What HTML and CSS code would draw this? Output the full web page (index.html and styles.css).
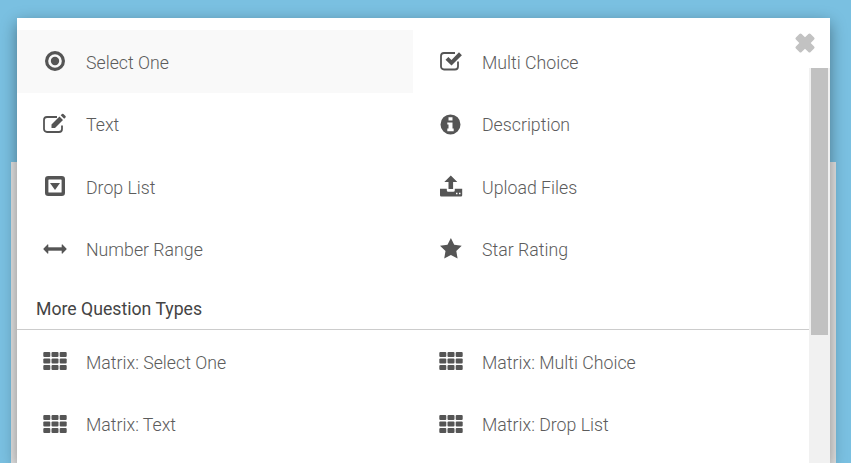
FILE: index.html
```html
<!DOCTYPE html>
<html lang="en">
<head>
<meta charset="utf-8">
<title>Question Types</title>
<link rel="stylesheet" href="styles.css">
</head>
<body>
<svg class="defs" aria-hidden="true"><symbol id="matrix" viewBox="0 0 24 24"><rect x=".3" y="3" width="7" height="5" rx="1"/><rect x="8.500" y="3" width="7" height="5" rx="1"/><rect x="16.700" y="3" width="7" height="5" rx="1"/><rect x=".3" y="9.500" width="7" height="5" rx="1"/><rect x="8.500" y="9.500" width="7" height="5" rx="1"/><rect x="16.700" y="9.500" width="7" height="5" rx="1"/><rect x=".3" y="16" width="7" height="5" rx="1"/><rect x="8.500" y="16" width="7" height="5" rx="1"/><rect x="16.700" y="16" width="7" height="5" rx="1"/></symbol></svg>
<div class="backdrop-panel"></div>
<div class="modal">
  <button class="close" aria-label="Close"><svg viewBox="0 0 22 22" width="22" height="22"><path d="M1.9 5.4 5.4 1.9a1.6 1.6 0 0 1 2.200 0L11 5.300 14.400 1.900a1.600 1.600 0 0 1 2.200 0l3.500 3.500a1.600 1.600 0 0 1 0 2.200L16.700 11l3.400 3.400a1.600 1.600 0 0 1 0 2.200l-3.500 3.500a1.600 1.600 0 0 1-2.200 0L11 16.700l-3.400 3.400a1.600 1.600 0 0 1-2.200 0l-3.500-3.500a1.600 1.600 0 0 1 0-2.200L5.300 11 1.900 7.600a1.600 1.600 0 0 1 0-2.200z"/></svg></button>
  <div class="scrollbar"><div class="thumb"></div></div>
  <div class="content">
    <div class="grid">
      <div class="item active"><span class="icon"><svg viewBox="0 0 24 24"><circle cx="12" cy="12" r="8.400" class="ring"/><circle cx="12" cy="12" r="4.200"/></svg></span><span class="label">Select One</span></div>
      <div class="item"><span class="icon"><svg viewBox="0 0 24 24"><path class="line" d="M19 12.500V17.500a3 3 0 0 1-3 3H5a3 3 0 0 1-3-3V7a3 3 0 0 1 3-3H16"/><path d="m6.500 10.800 2.900-2.900 3.100 3.100L20 3.300l2.900 2.900-10.400 10.400z"/></svg></span><span class="label">Multi Choice</span></div>
      <div class="item"><span class="icon"><svg viewBox="0 0 24 24"><path class="line" d="M19 13.500V17a3 3 0 0 1-3 3H4a3 3 0 0 1-3-3V8a3 3 0 0 1 3-3H14"/><path d="m8.500 12.500 8-8 3.500 3.500-8 8H8.500zM17.700 3.300l1.300-1.300a1 1 0 0 1 1.400 0l2.100 2.100a1 1 0 0 1 0 1.400l-1.300 1.300z"/></svg></span><span class="label">Text</span></div>
      <div class="item"><span class="icon"><svg viewBox="0 0 24 24"><path fill-rule="evenodd" d="M11.500 2.400a10 10 0 1 1 0 20 10 10 0 0 1 0-20zM9.500 5.200v3.200h4V5.200zM8.300 10.400v2.200h1.200v4H8.300v2.600h6.400v-2.600h-1.200v-6.200z"/></svg></span><span class="label">Description</span></div>
      <div class="item"><span class="icon"><svg viewBox="0 0 24 24"><path fill-rule="evenodd" d="M5.200 2h13.600A3.200 3.200 0 0 1 22 5.200v13.600a3.200 3.200 0 0 1-3.200 3.200H5.200A3.200 3.200 0 0 1 2 18.800V5.200A3.200 3.200 0 0 1 5.200 2zM6 5.400a.6.600 0 0 0-.6.600v12a.6.600 0 0 0 .6.600h12a.6.600 0 0 0 .6-.6V6a.6.600 0 0 0-.6-.6z"/><path d="M7 9h10l-5 7z"/></svg></span><span class="label">Drop List</span></div>
      <div class="item"><span class="icon"><svg viewBox="0 0 24 24"><path fill-rule="evenodd" d="M11.800 1.600 18.300 8h-4.200v7H9.500V8H5.300zM1 14.800h6.800v1.400a1.500 1.500 0 0 0 1.500 1.500h5a1.500 1.500 0 0 0 1.500-1.500v-1.400h7.400v6.400a1.200 1.200 0 0 1-1.200 1.200H2.200A1.200 1.200 0 0 1 1 21.200zM17 18.800v1.400h1.500v-1.400zM20 18.800v1.400h1.500v-1.400z"/></svg></span><span class="label">Upload Files</span></div>
      <div class="item"><span class="icon"><svg viewBox="0 0 24 24"><path d="M4 10.300H20V13.700H4z"/><path d="M5.300 7.700v8.600a.5.5 0 0 1-.8.300L.6 12.500a.7.700 0 0 1 0-1l3.900-4.100a.5.5 0 0 1 .8.300zM18.700 7.700v8.600a.5.5 0 0 0 .8.300l3.900-4.100a.7.700 0 0 0 0-1l-3.900-4.100a.5.5 0 0 0-.8.300z"/></svg></span><span class="label">Number Range</span></div>
      <div class="item"><span class="icon"><svg viewBox="0 0 24 24"><path d="m11.900 1 3.300 6.800 7.500 1-5.400 5.300 1.300 7.500-6.700-3.600-6.700 3.600 1.300-7.500L1 8.800l7.500-1z"/></svg></span><span class="label">Star Rating</span></div>
    </div>
    <h2 class="section"><span class="section-text">More Question Types</span></h2>
    <div class="grid">
      <div class="item"><span class="icon"><svg><use href="#matrix"/></svg></span><span class="label">Matrix: Select One</span></div>
      <div class="item"><span class="icon"><svg><use href="#matrix"/></svg></span><span class="label">Matrix: Multi Choice</span></div>
      <div class="item"><span class="icon"><svg><use href="#matrix"/></svg></span><span class="label">Matrix: Text</span></div>
      <div class="item"><span class="icon"><svg><use href="#matrix"/></svg></span><span class="label">Matrix: Drop List</span></div>
    </div>
  </div>
</div>
</body>
</html>
```

FILE: styles.css
```css
html, body {
  margin: 0;
  height: 100%;
  overflow: hidden;
}
body {
  position: relative;
  background: #7ac0e1;
  font-family: Roboto, sans-serif;
}
.defs {
  display: none;
}
.backdrop-panel {
  position: absolute;
  left: 11px;
  top: 162px;
  width: 825px;
  height: 301px;
  background: #e4e4e4;
}
.modal {
  position: absolute;
  left: 17px;
  top: 18px;
  width: 813px;
  height: 445px;
  background: #fff;
  padding-top: 12px;
  box-sizing: border-box;
  box-shadow: 0 5px 15px rgba(0, 0, 0, .4);
}
.close {
  position: absolute;
  top: 14px;
  right: 14px;
  padding: 0;
  border: 0;
  background: none;
  line-height: 0;
}
.close svg {
  fill: #c2c2c2;
}
.scrollbar {
  position: absolute;
  left: 792px;
  top: 50px;
  right: 0;
  bottom: 0;
  background: #f1f1f1;
  display: flex;
  justify-content: center;
}
.thumb {
  width: 17px;
  height: 267px;
  background: #c1c1c1;
}
.content {
  width: 792px;
  height: 433px;
  overflow: hidden;
}
.grid {
  display: grid;
  grid-template-columns: 396px 396px;
  grid-auto-rows: 62.5px;
}
.item {
  display: flex;
  align-items: center;
  padding-left: 26px;
  color: #555;
}
.label {
  display: inline-block;
  transform: translateY(1px) scaleX(.933);
  transform-origin: left center;
  color: #5c5c5c;
  font-size: 19px;
  font-weight: 300;
  white-space: nowrap;
}
.item.active {
  background: #f9f9f9;
}
.icon {
  width: 24px;
  height: 24px;
  margin-right: 19px;
  flex: none;
  display: block;
}
.icon svg {
  display: block;
  width: 24px;
  height: 24px;
  fill: #555;
}
.icon .ring {
  fill: none;
  stroke: #555;
  stroke-width: 3.200;
}
.icon .line {
  fill: none;
  stroke: #555;
  stroke-width: 1.800;
}
.section {
  margin: 0;
  height: 50px;
  box-sizing: border-box;
  padding: 18px 0 0 19px;
  border-bottom: 1px solid #ccc;
  color: #444;
  font-size: 19px;
  font-weight: 400;
  line-height: 21px;
}
.section-text {
  display: inline-block;
  transform: scaleX(.93);
  transform-origin: left center;
  white-space: nowrap;
}
```
